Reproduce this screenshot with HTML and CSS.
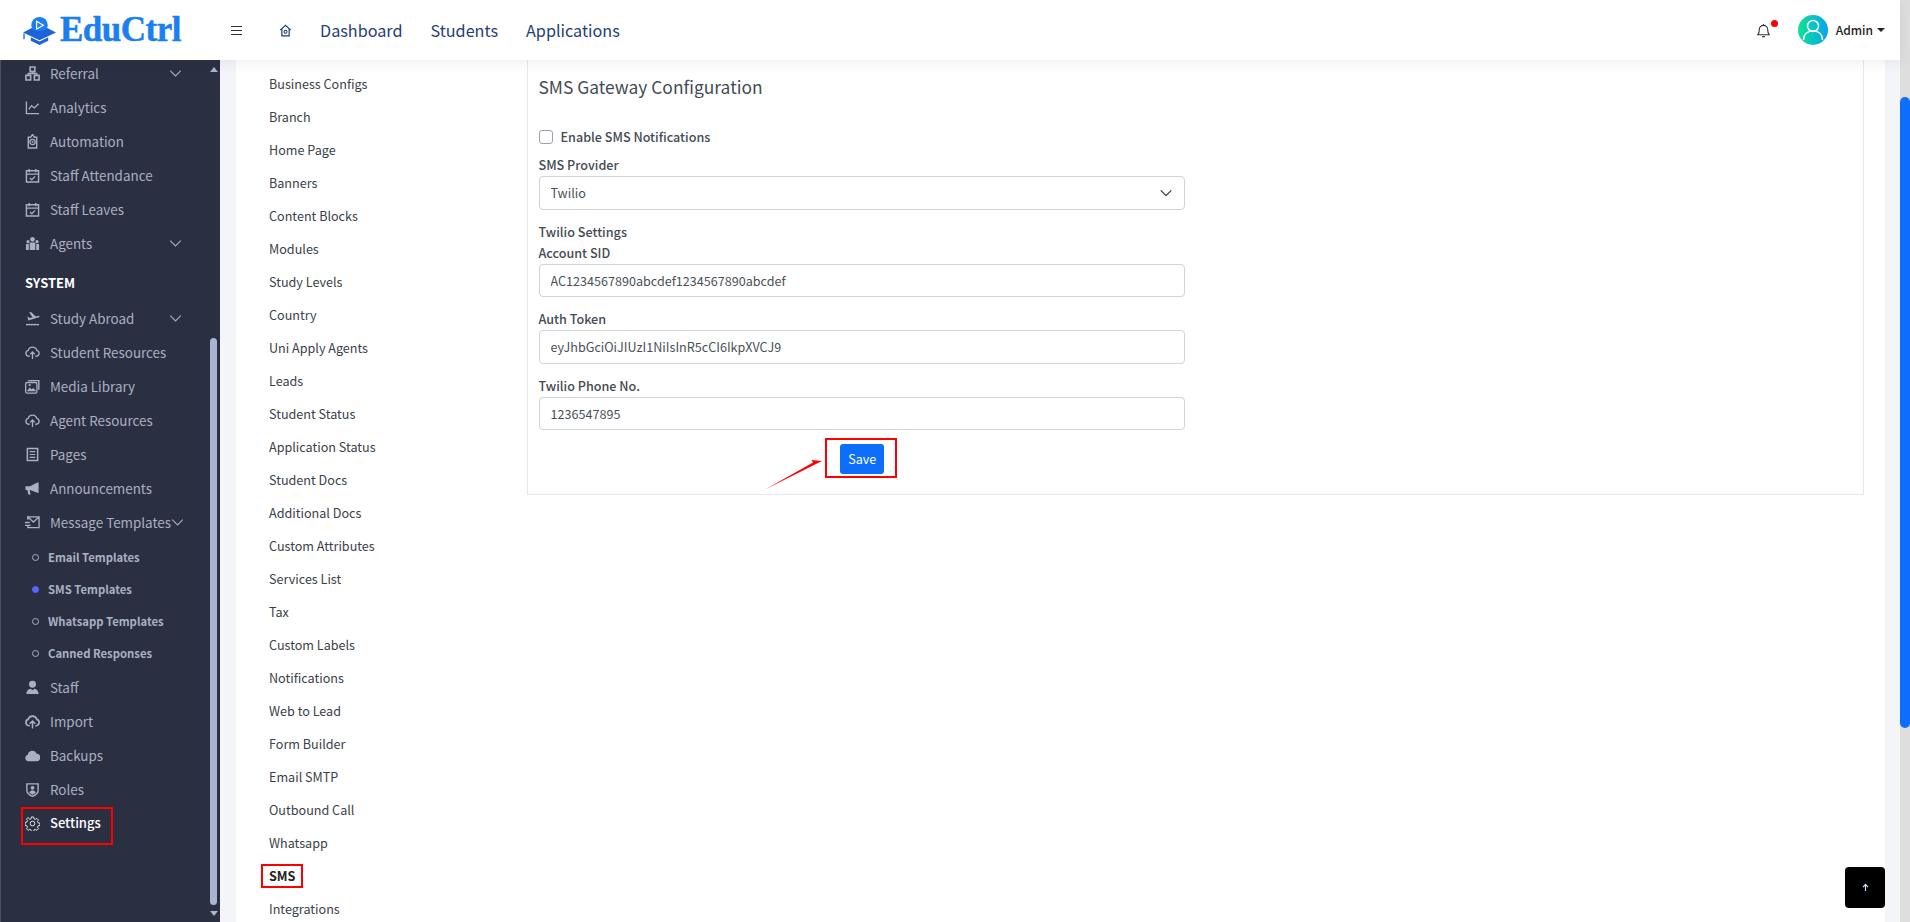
FILE: index.html
```html
<!DOCTYPE html>
<html lang="en">

<head>
	<meta charset="UTF-8">
	<meta name="viewport" content="width=device-width, initial-scale=1.0">
	<title>EduCtrl - SMS Settings</title>
	<link rel="stylesheet" href="styles.css">
</head>

<body>
	<svg class="icon-defs" aria-hidden="true">
		<symbol id="i-chev" viewBox="0 0 16 16"><path d="M1.500 4.500L8 11l6.500-6.500" fill="none" stroke="currentColor" stroke-width="1.300"/></symbol>
		<symbol id="i-sitemap" viewBox="0 0 16 16"><path d="M5.500 1h5v5h-5zM1 10h5v5H1zM10 10h5v5h-5z" fill="none" stroke="currentColor" stroke-width="1.700"/><path d="M8 6v2M3.500 10V8h9v2" fill="none" stroke="currentColor" stroke-width="1.400"/></symbol>
		<symbol id="i-chart" viewBox="0 0 16 16"><path d="M1.500 1.500v13h13.500M4 10l3-4 3 2.500 4.500-4.500" fill="none" stroke="currentColor" stroke-width="1.400"/></symbol>
		<symbol id="i-bot" viewBox="0 0 16 16"><path d="M8 .5l2 3h2.500v11.500h-9V3.500H6z" fill="none" stroke="currentColor" stroke-width="1.500"/><circle cx="8" cy="8.500" r="2.800" fill="none" stroke="currentColor" stroke-width="1.400"/><circle cx="8" cy="8.500" r="1" fill="currentColor"/></symbol>
		<symbol id="i-cal" viewBox="0 0 16 16"><path d="M1.500 3h13v12h-13zM1.500 6.500h13M4.500 1v3.500M11.500 1v3.500" fill="none" stroke="currentColor" stroke-width="1.500"/><path d="M5.200 10.500l2 2 3.600-3.600" fill="none" stroke="currentColor" stroke-width="1.400"/></symbol>
		<symbol id="i-group" viewBox="0 0 16 16"><circle cx="8" cy="3.500" r="2.500" fill="currentColor"/><circle cx="3.200" cy="6" r="1.700" fill="currentColor"/><circle cx="12.800" cy="6" r="1.700" fill="currentColor"/><path d="M5 7h6v8H5zM1 8.500h3V15H1zM12 8.500h3V15h-3z" fill="currentColor"/></symbol>
		<symbol id="i-plane" viewBox="0 0 16 16"><path d="M1 14.500h14" fill="none" stroke="currentColor" stroke-width="1.500"/><path d="M2.500 5.500l2.500 2 3-.8L4.500 1.500l2-.5 5 4.800 2.800-.8c1.300-.3 1.700 1.200.5 1.600L3.500 10z" fill="currentColor"/></symbol>
		<symbol id="i-cloud-up" viewBox="0 0 16 16"><path d="M5 12H4a3.200 3.200 0 0 1-.6-6.300 4.800 4.800 0 0 1 9.200 0A3.200 3.200 0 0 1 12 12h-1" fill="none" stroke="currentColor" stroke-width="1.400"/><path d="M8 15V7.500M5.500 10L8 7.500l2.500 2.500" fill="none" stroke="currentColor" stroke-width="1.400"/></symbol>
		<symbol id="i-media" viewBox="0 0 16 16"><path d="M3.500 1h12v10.500H14V2.500H3.500z" fill="currentColor"/><rect x=".7" y="3.700" width="12" height="11.300" rx="1.500" fill="none" stroke="currentColor" stroke-width="1.400"/><path d="M2 13l3-4 2 2 2-1.500 3 3.500z" fill="currentColor"/><circle cx="5" cy="6.500" r="1.200" fill="currentColor"/></symbol>
		<symbol id="i-page" viewBox="0 0 16 16"><path d="M2.500 1.500h11v13h-11z" fill="none" stroke="currentColor" stroke-width="1.600"/><path d="M5 5h6M5 8h6M5 11h6" stroke="currentColor" stroke-width="1.300"/></symbol>
		<symbol id="i-mega" viewBox="0 0 16 16"><path d="M.5 5.500h5L13 1.500h1.500v11H13l-7.500-3H5l1 5H3.500l-1-5h-2z" fill="currentColor"/></symbol>
		<symbol id="i-mail" viewBox="0 0 16 16"><path d="M3 2h12v11.500H3v-2.500M3 5V2l6 5.500L15 2" fill="none" stroke="currentColor" stroke-width="1.400"/><path d="M0 8h5M0 11h6" stroke="currentColor" stroke-width="1.400"/></symbol>
		<symbol id="i-user" viewBox="0 0 16 16"><circle cx="8" cy="4.500" r="3.700" fill="currentColor"/><path d="M1.500 15c0-4 2.500-5.500 4.500-5.800L8 11l2-1.800c2 .3 4.500 1.800 4.500 5.800z" fill="currentColor"/></symbol>
		<symbol id="i-cloud-solid" viewBox="0 0 16 16"><path d="M5 12.500H4a3.500 3.500 0 0 1-.6-6.800 4.800 4.800 0 0 1 9.200 0 3.500 3.500 0 0 1-.6 6.800h-1" fill="none" stroke="currentColor" stroke-width="1.800"/><path d="M8 15.500V8M5 10.500L8 7.500l3 3" fill="none" stroke="currentColor" stroke-width="1.600"/></symbol>
		<symbol id="i-cloud" viewBox="0 0 16 16"><path d="M3.800 14A3.500 3.500 0 0 1 3 7.100 5 5 0 0 1 12.500 6a4 4 0 0 1-.5 8z" fill="currentColor"/></symbol>
		<symbol id="i-shield" viewBox="0 0 16 16"><path d="M2 2h12v7c0 3-3 5-6 6.300C5 14 2 12 2 9z" fill="none" stroke="currentColor" stroke-width="1.500"/><circle cx="8" cy="6.200" r="2" fill="currentColor"/><path d="M4.500 11.500c.5-2 2-2.500 3.500-2.500s3 .5 3.500 2.500L8 13.500z" fill="currentColor"/></symbol>
		<symbol id="i-gear" viewBox="0 0 16 16"><circle cx="8" cy="8" r="2.500" fill="none" stroke="currentColor" stroke-width=".9"/><path d="M6.800 1h2.400l.4 2 1.400.6 1.700-1.100 1.700 1.700-1.100 1.700.6 1.400 2 .4v2.400l-2 .4-.6 1.400 1.100 1.700-1.700 1.700-1.700-1.100-1.400.6-.4 2H6.800l-.4-2-1.400-.6-1.700 1.100-1.700-1.700 1.100-1.700-.6-1.400-2-.4V6.800l2-.4.6-1.400-1.100-1.700 1.700-1.700L5 3.700l1.400-.6z" fill="none" stroke="currentColor" stroke-width=".9"/></symbol>
	</svg>

	<div class="page">
		<header class="topbar">
			<a class="brand" href="#">
				<svg class="brand-icon" viewBox="0 0 34 30">
					<circle cx="17" cy="9.500" r="8.500" fill="#1b7ff0"/>
					<path d="M14 5.500l7 4-7 4z" fill="none" stroke="#fff" stroke-width="1.200"/>
					<path d="M0 17L9 12.500c3 4 13 4 16 0L34 17 17 25z" fill="#1b63d8"/>
					<path d="M8 22l9 4.500L26 22v3.500L17 30 8 25.500z" fill="#1b63d8"/>
					<path d="M1 18v6" stroke="#1b7ff0" stroke-width="1.500"/>
				</svg>
				<span class="brand-name">EduCtrl</span>
			</a>
			<span class="burger"><i></i><i></i><i></i></span>
			<svg class="home-icon" viewBox="0 0 16 16">
				<path d="M1.500 7.500L8 1.500l6.500 6M3.500 6v8.500h9V6" fill="none" stroke="currentColor" stroke-width="1.500"/>
				<circle cx="8" cy="9.500" r="1.800" fill="none" stroke="currentColor" stroke-width="1.300"/>
			</svg>
			<nav class="topnav">
				<a href="#">Dashboard</a>
				<a href="#">Students</a>
				<a href="#">Applications</a>
			</nav>
			<div class="top-right">
				<span class="bell">
					<svg viewBox="0 0 16 16"><path d="M2 12.500c1.500-1.500 1.500-3 1.500-5.500a4.500 4.500 0 0 1 9 0c0 2.500 0 4 1.500 5.500zM6.500 14.500h3M8 1v1" fill="none" stroke="#333" stroke-width="1.200"/></svg>
					<i class="bell-dot"></i>
				</span>
				<span class="avatar">
					<svg viewBox="0 0 30 30"><circle cx="15" cy="11" r="5.500" fill="none" stroke="#fff" stroke-width="1.500"/><path d="M5.500 25c0-6 4-9 9.500-9s9.500 3 9.500 9" fill="none" stroke="#fff" stroke-width="1.500"/></svg>
				</span>
				<span class="admin">Admin</span>
				<i class="caret"></i>
			</div>
		</header>

		<div class="body-row">
			<aside class="sidebar">
				<ul class="side-nav">
					<li class="side-item"><svg class="side-icon"><use href="#i-sitemap"/></svg><span>Referral</span><svg class="chev"><use href="#i-chev"/></svg></li>
					<li class="side-item"><svg class="side-icon"><use href="#i-chart"/></svg><span>Analytics</span></li>
					<li class="side-item"><svg class="side-icon"><use href="#i-bot"/></svg><span>Automation</span></li>
					<li class="side-item"><svg class="side-icon"><use href="#i-cal"/></svg><span>Staff Attendance</span></li>
					<li class="side-item"><svg class="side-icon"><use href="#i-cal"/></svg><span>Staff Leaves</span></li>
					<li class="side-item"><svg class="side-icon"><use href="#i-group"/></svg><span>Agents</span><svg class="chev"><use href="#i-chev"/></svg></li>
					<li class="side-title">SYSTEM</li>
					<li class="side-item"><svg class="side-icon"><use href="#i-plane"/></svg><span>Study Abroad</span><svg class="chev"><use href="#i-chev"/></svg></li>
					<li class="side-item"><svg class="side-icon"><use href="#i-cloud-up"/></svg><span>Student Resources</span></li>
					<li class="side-item"><svg class="side-icon"><use href="#i-media"/></svg><span>Media Library</span></li>
					<li class="side-item"><svg class="side-icon"><use href="#i-cloud-up"/></svg><span>Agent Resources</span></li>
					<li class="side-item"><svg class="side-icon"><use href="#i-page"/></svg><span>Pages</span></li>
					<li class="side-item"><svg class="side-icon"><use href="#i-mega"/></svg><span>Announcements</span></li>
					<li class="side-item"><svg class="side-icon"><use href="#i-mail"/></svg><span>Message Templates</span><svg class="chev"><use href="#i-chev"/></svg></li>
					<li>
						<ul class="side-sub">
							<li class="sub-item"><i class="dot"></i>Email Templates</li>
							<li class="sub-item"><i class="dot dot-on"></i>SMS Templates</li>
							<li class="sub-item"><i class="dot"></i>Whatsapp Templates</li>
							<li class="sub-item"><i class="dot"></i>Canned Responses</li>
						</ul>
					</li>
					<li class="side-item"><svg class="side-icon"><use href="#i-user"/></svg><span>Staff</span></li>
					<li class="side-item"><svg class="side-icon"><use href="#i-cloud-solid"/></svg><span>Import</span></li>
					<li class="side-item"><svg class="side-icon"><use href="#i-cloud"/></svg><span>Backups</span></li>
					<li class="side-item"><svg class="side-icon"><use href="#i-shield"/></svg><span>Roles</span></li>
					<li class="side-item side-active"><svg class="side-icon"><use href="#i-gear"/></svg><span>Settings</span><i class="settings-mark"></i></li>
				</ul>
				<div class="side-scroll">
					<i class="arrow-up"></i>
					<i class="side-thumb"></i>
					<i class="arrow-down"></i>
				</div>
			</aside>

			<main class="content">
				<div class="card">
					<ul class="settings-list">
						<li>Business Configs</li>
						<li>Branch</li>
						<li>Home Page</li>
						<li>Banners</li>
						<li>Content Blocks</li>
						<li>Modules</li>
						<li>Study Levels</li>
						<li>Country</li>
						<li>Uni Apply Agents</li>
						<li>Leads</li>
						<li>Student Status</li>
						<li>Application Status</li>
						<li>Student Docs</li>
						<li>Additional Docs</li>
						<li>Custom Attributes</li>
						<li>Services List</li>
						<li>Tax</li>
						<li>Custom Labels</li>
						<li>Notifications</li>
						<li>Web to Lead</li>
						<li>Form Builder</li>
						<li>Email SMTP</li>
						<li>Outbound Call</li>
						<li>Whatsapp</li>
						<li><span class="sms-mark">SMS</span></li>
						<li>Integrations</li>
					</ul>

					<section class="panel">
						<h2 class="panel-title">SMS Gateway Configuration</h2>
						<form class="sms-form">
							<label class="check-row"><input type="checkbox" class="check">Enable SMS Notifications</label>
							<div class="field">
								<label class="field-label">SMS Provider</label>
								<select class="control control-select"><option>Twilio</option></select>
							</div>
							<div class="group-title">Twilio Settings</div>
							<div class="field">
								<label class="field-label">Account SID</label>
								<input class="control" type="text" value="AC1234567890abcdef1234567890abcdef">
							</div>
							<div class="field">
								<label class="field-label">Auth Token</label>
								<input class="control" type="text" value="eyJhbGciOiJIUzI1NiIsInR5cCI6IkpXVCJ9">
							</div>
							<div class="field">
								<label class="field-label">Twilio Phone No.</label>
								<input class="control" type="text" value="1236547895">
							</div>
							<div class="save-row">
								<div class="save-mark">
									<svg class="save-arrow" viewBox="0 0 60 30"><path d="M58 1L1 29.500 49 2.500 47.500 0z" fill="#f00"/></svg>
									<button class="btn-save" type="button">Save</button>
								</div>
							</div>
						</form>
					</section>
				</div>
				<button class="to-top" type="button">
					<svg viewBox="0 0 10 10"><path d="M5 9V2M2.200 4.500L5 1.500l2.800 3" fill="none" stroke="#cfe3f5" stroke-width="1.300"/></svg>
				</button>
			</main>
		</div>
	</div>

	<div class="page-scroll"><i class="page-thumb"></i></div>
</body>

</html>
```
FILE: styles.css
```css
:root {
	--side: #2a2f42;
	--side-text: #aab1c1;
	--blue: #0d6efd;
	--nav: #1f4079;
	--text: #444b54;
	--line: #e6e8ec;
	--control-line: #ced4da;
	--mark: #f00;
}

* {
	box-sizing: border-box;
}

html,
body {
	height: 100%;
}

body {
	margin: 0;
	display: flex;
	overflow: hidden;
	font-family: "Noto Sans CJK SC", "Noto Sans", sans-serif;
	font-size: 12.6px;
	color: var(--text);
	background: #f3f5f9;
}

ul {
	list-style: none;
	margin: 0;
	padding: 0;
}

a {
	text-decoration: none;
	color: inherit;
}

.icon-defs {
	position: absolute;
	width: 0;
	height: 0;
}

.page {
	flex: 1;
	min-width: 0;
	display: flex;
	flex-direction: column;
}

/* Top bar */
.topbar {
	position: relative;
	z-index: 2;
	flex: none;
	height: 60px;
	display: flex;
	align-items: center;
	padding-left: 23px;
	padding-right: 15px;
	background: #fff;
	box-shadow: 0 2px 12px rgba(60, 70, 100, 0.1);
}

.brand {
	display: flex;
	align-items: center;
	width: 208px;
}

.brand-icon {
	width: 33px;
	height: 29px;
	margin-right: 4px;
}

.brand-name {
	font-family: "Liberation Serif", serif;
	font-size: 35px;
	font-weight: 700;
	line-height: 40px;
	letter-spacing: -0.5px;
	color: #1b7ff0;
	-webkit-text-stroke: 0.5px #1b7ff0;
}

.burger {
	display: flex;
	flex-direction: column;
	gap: 3px;
	width: 11px;
	margin-right: 37px;
}

.burger i {
	height: 1px;
	background: #333;
}

.home-icon {
	width: 13px;
	height: 13px;
	margin-right: 28px;
	color: var(--nav);
}

.topnav {
	display: flex;
	gap: 28px;
	font-size: 16.2px;
	line-height: 24px;
	color: var(--nav);
}

.top-right {
	margin-left: auto;
	display: flex;
	align-items: center;
}

.bell {
	position: relative;
	display: flex;
	margin-right: 27px;
}

.bell svg {
	width: 15px;
	height: 15px;
}

.bell-dot {
	position: absolute;
	top: -3px;
	right: -7px;
	width: 7px;
	height: 7px;
	border-radius: 50%;
	background: var(--mark);
}

.avatar {
	display: flex;
	width: 30px;
	height: 30px;
	border-radius: 50%;
	background: linear-gradient(90deg, #0fe38f, #05a4f2);
}

.admin {
	margin-left: 8px;
	font-size: 12px;
	font-weight: 500;
	line-height: 20px;
	color: #222;
}

.caret {
	margin-left: 4px;
	border-top: 4px solid #222;
	border-left: 4px solid transparent;
	border-right: 4px solid transparent;
}

.body-row {
	flex: 1;
	min-height: 0;
	display: flex;
}

/* Sidebar */
.sidebar {
	position: relative;
	flex: none;
	width: 220px;
	overflow: hidden;
	border-left: 1px solid #4a5066;
	background: var(--side);
	color: var(--side-text);
}

.side-nav {
	margin-top: -4px;
}

.side-item {
	position: relative;
	height: 34px;
	display: flex;
	align-items: center;
	padding-left: 24px;
	padding-right: 38px;
	font-size: 13.4px;
	line-height: 20px;
	white-space: nowrap;
}

.side-icon {
	flex: none;
	width: 15px;
	height: 15px;
	margin-right: 10px;
}

.chev {
	flex: none;
	width: 13px;
	height: 13px;
	margin-left: auto;
}

.side-title {
	height: 41px;
	padding-left: 24px;
	font-size: 13px;
	font-weight: 700;
	line-height: 45px;
	color: #fff;
}

.side-sub {
	margin: 2px 0 1px;
}

.sub-item {
	height: 32px;
	display: flex;
	align-items: center;
	padding-left: 31px;
	font-size: 11.3px;
	font-weight: 700;
	line-height: 18px;
	white-space: nowrap;
}

.dot {
	width: 7px;
	height: 7px;
	margin-right: 9px;
	border: 1px solid var(--side-text);
	border-radius: 50%;
}

.dot-on {
	border-color: #5666ff;
	background: #5666ff;
}

.side-active {
	font-size: 13px;
	font-weight: 500;
	color: #fff;
}

.settings-mark {
	position: absolute;
	top: 1px;
	left: 20px;
	width: 92px;
	height: 38px;
	border: 2px solid var(--mark);
}

.side-scroll {
	position: absolute;
	top: 0;
	bottom: 0;
	right: 3px;
	width: 7px;
}

.side-thumb {
	position: absolute;
	top: 278px;
	bottom: 17px;
	left: 0;
	right: 0;
	border-radius: 4px;
	background: #a9b5d0;
}

.arrow-up,
.arrow-down {
	position: absolute;
	left: 0;
	border-left: 4px solid transparent;
	border-right: 4px solid transparent;
}

.arrow-up {
	top: 7px;
	border-bottom: 5px solid #a9b5d0;
}

.arrow-down {
	bottom: 6px;
	border-top: 5px solid #a9b5d0;
}

/* Main column */
.content {
	position: relative;
	flex: 1;
	min-width: 0;
	overflow: hidden;
	padding: 0 15px 0 16px;
}

.card {
	display: flex;
	align-items: flex-start;
	min-height: 100%;
	padding-right: 21px;
	background: #fff;
}

.settings-list {
	flex: none;
	width: 291px;
	padding-top: 7px;
	padding-left: 33px;
	color: #3a4149;
}

.settings-list li {
	height: 33px;
	display: flex;
	align-items: center;
	line-height: 20px;
}

.sms-mark {
	height: 24px;
	margin-left: -8px;
	padding: 0 6px;
	border: 2px solid var(--mark);
	font-weight: 700;
	line-height: 19px;
	color: #222;
}

.panel {
	flex: 1;
	min-width: 0;
	padding: 13px 10px 16px 10.5px;
	border: 1px solid var(--line);
	border-top: 0;
}

.panel-title {
	margin: 0 0 26px;
	font-size: 17.4px;
	font-weight: 400;
	line-height: 28px;
}

.sms-form {
	width: 646.5px;
}

.check-row {
	height: 20px;
	display: flex;
	align-items: center;
	margin-bottom: 8px;
	font-weight: 500;
	line-height: 20px;
}

.check {
	appearance: none;
	width: 14px;
	height: 14px;
	margin: 0 8px 0 0;
	border: 1px solid #9aa1aa;
	border-radius: 3px;
	background: #fff;
}

.field {
	margin-bottom: 12px;
}

.field-label {
	display: block;
	height: 20px;
	margin-bottom: 1px;
	font-weight: 500;
	line-height: 20px;
}

.group-title {
	height: 21px;
	font-weight: 500;
	line-height: 20px;
}

.control {
	display: block;
	width: 100%;
	height: 33.5px;
	padding: 0 11px;
	border: 1px solid var(--control-line);
	border-radius: 4px;
	outline: 0;
	background: #fff;
	font: inherit;
	color: #4a5058;
}

.control-select {
	appearance: none;
	background-image: url("data:image/svg+xml,%3csvg xmlns='http://www.w3.org/2000/svg' viewBox='0 0 16 16'%3e%3cpath fill='none' stroke='%23343a40' stroke-width='1.500' d='M2 5l6 6 6-6'/%3e%3c/svg%3e");
	background-repeat: no-repeat;
	background-position: right 11px center;
	background-size: 14px 14px;
}

.save-row {
	display: flex;
	justify-content: center;
	margin-top: -4px;
}

.save-mark {
	position: relative;
	display: flex;
	margin-left: -1px;
	padding: 4px 11px 2px 13px;
	border: 2px solid var(--mark);
}

.save-arrow {
	position: absolute;
	top: 20px;
	right: 100%;
	width: 60px;
	height: 30px;
	margin-right: 3px;
}

.btn-save {
	width: 44px;
	height: 30px;
	padding: 0;
	border: 0;
	border-radius: 3px;
	background: var(--blue);
	font: inherit;
	line-height: 20px;
	color: #fff;
}

.to-top {
	position: absolute;
	right: 15px;
	bottom: 14px;
	display: flex;
	align-items: center;
	justify-content: center;
	width: 40px;
	height: 41px;
	padding: 0;
	border: 0;
	border-radius: 4px;
	background: #000;
}

.to-top svg {
	width: 9px;
	height: 9px;
}

/* Page scrollbar */
.page-scroll {
	flex: none;
	width: 10px;
	padding-top: 97px;
	background: #dedede;
}

.page-thumb {
	display: block;
	height: 631px;
	border-radius: 5px;
	background: var(--blue);
}
```
